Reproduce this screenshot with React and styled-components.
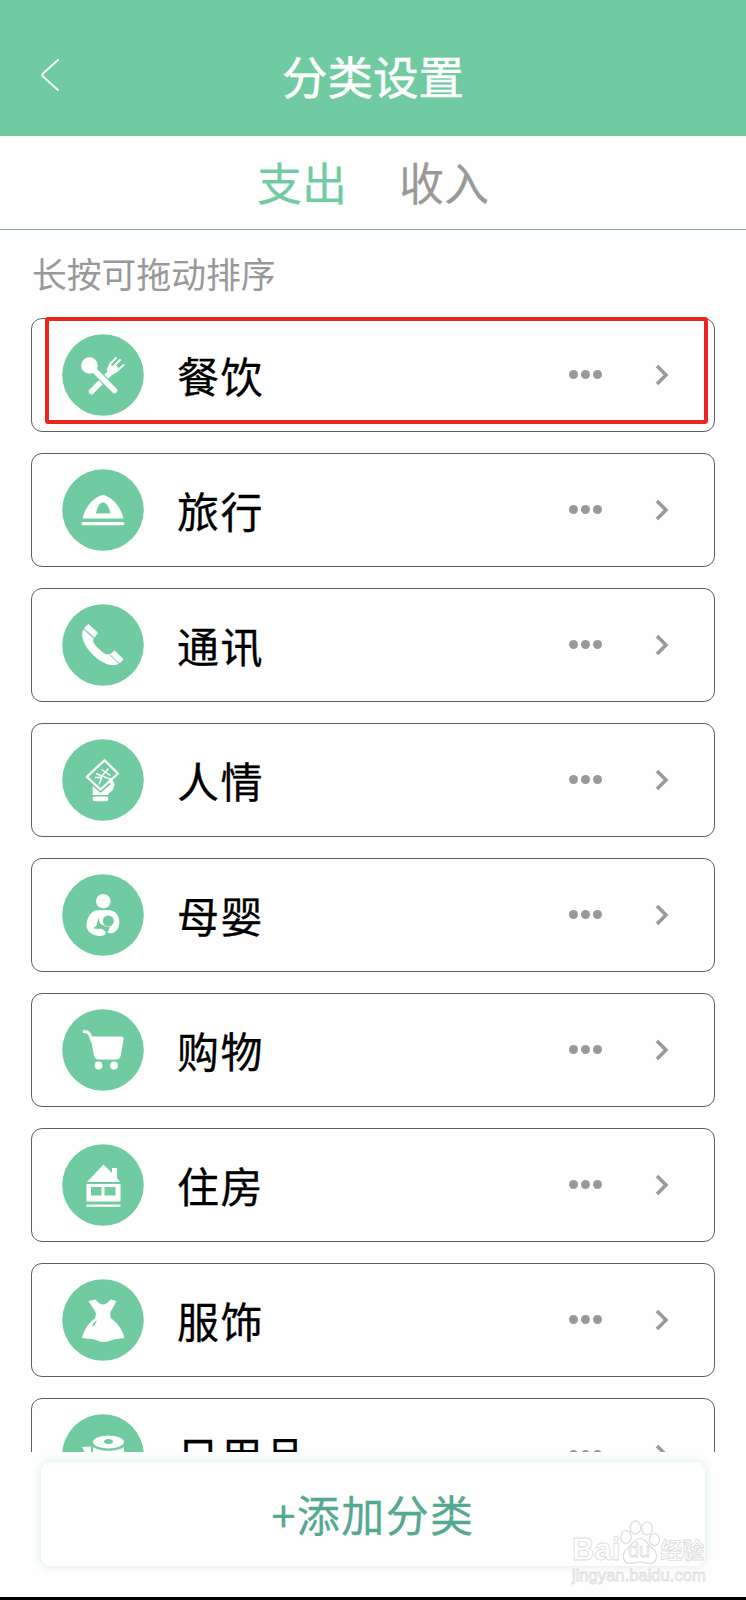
import React, { useState } from "react";
import styled, { createGlobalStyle } from "styled-components";

const GREEN = "#70cca0";

// icons are drawn on an 82 x 82 disc
const icons = {
  food: (
    <>
      <path d="M53 34 L29.500 57.500" stroke="#fff" strokeWidth="5.500" strokeLinecap="round" />
      <path
        d="M46 35 L48.500 29.500 L54 24 M50 34 L58 26 M47 40 L54 38 L61.500 31"
        stroke="#fff"
        strokeWidth="1.900"
        strokeLinecap="round"
      />
      <path d="M44.500 36 L48 30 L55.500 37 L50 41 Z" fill="#fff" />
      <path d="M30 34 L53 57" stroke={GREEN} strokeWidth="8" />
      <circle cx="27.500" cy="31.500" r="8.300" fill="#fff" />
      <path d="M30 34 L52.500 56.500" stroke="#fff" strokeWidth="5.500" strokeLinecap="round" />
    </>
  ),
  travel: (
    <>
      <path
        fill="#fff"
        fillRule="evenodd"
        d="M20.500 49.500 C23 39 29 31 38 26.800 Q41 25.200 44 26.800 C53 31 59 39 61.500 49.500 Z M34 44.500 H48.500 C47 37 44 33.500 41 33.500 C38 33.500 35.500 37 34 44.500 Z"
      />
      <rect x="19.500" y="53" width="43" height="3.200" rx="1.600" fill="#fff" />
    </>
  ),
  phone: (
    <>
      <path
        fill="#fff"
        d="M21.500 25 L32 34 C30 37 31.500 39.500 36 44 C41 49 44.500 52 48 49.500 L57 59.500 C52 63 43 61 34.500 54 C25 46 17 34 21.500 25 Z"
      />
      <path d="M26.300 20.500 L35.500 28.800 L32.500 33 L22.500 24.300 Z" fill="#fff" stroke="#fff" strokeLinejoin="round" />
      <path d="M52.500 47 L61 55.300 L57.500 59 L48.800 50.300 Z" fill="#fff" stroke="#fff" strokeLinejoin="round" />
      <path d="M21.500 25 L32 34.500 M47.500 50.500 L57.500 60" stroke={GREEN} strokeWidth="0.900" />
    </>
  ),
  gift: (
    <>
      <path d="M42.500 21.300 L56 34.500 L38.500 50.500 L24.800 37.800 Z" stroke="#fff" strokeWidth="2.300" strokeLinejoin="round" />
      <path
        d="M39.500 30.500 L48.500 36.500 M34 34.500 L46.500 39.500 M46.500 29.500 L38.500 38.500 L33 38.500 M40 37.500 L37 45.500"
        stroke="#fff"
        strokeWidth="1.500"
      />
      <path
        fill="#fff"
        d="M30.700 47 L38.500 54 L48.500 45.500 L46.500 41.500 L47.500 38.500 L50 40 L52.700 45.500 L51 51 L46.500 54.500 V56 H30.700 Z"
      />
      <rect x="30.700" y="57.500" width="15.500" height="4.700" rx="2" fill="#fff" />
    </>
  ),
  baby: (
    <>
      <circle cx="41.300" cy="27.200" r="7.300" fill="#fff" />
      <path
        fill="#fff"
        d="M34 36.300 H48 C54 37 57.300 42 57.300 48.500 C57.300 54 54 58.500 49 59.500 L45.500 58.500 L43.500 57.500 C45 62 39 62.500 34 61.500 C28 60 24.300 55.500 24.300 51 C25 45 28 38 34 36.300 Z"
      />
      <circle cx="46.300" cy="47" r="5.500" fill={GREEN} />
      <path fill={GREEN} d="M36.500 44 L38 49.500 L43.500 52.500 L48 53 L45.500 58.500 L43.500 57.500 L40 55 L31 54.500 L34.500 51.500 Z" />
    </>
  ),
  cart: (
    <>
      <path d="M22 22.500 C27 22.500 28 25 30 32" stroke="#fff" strokeWidth="3" strokeLinecap="round" />
      <path
        fill="#fff"
        d="M28.500 27.500 H59 C61.500 27.500 62 29 61.500 31 L59 45 C58.500 49 57 50.500 54 50.500 H37 C34 50.500 32.500 49.500 31.500 45 Z"
      />
      <circle cx="36.500" cy="56.500" r="3.900" fill="#fff" />
      <circle cx="52" cy="56.500" r="3.900" fill="#fff" />
    </>
  ),
  house: (
    <>
      <path fill="#fff" d="M25 38 L41.500 20.500 L50 29 V24 H55 V34 L58 38 Z" />
      <path
        fill="#fff"
        fillRule="evenodd"
        d="M24.500 40 H58.500 V57.500 H24.500 Z M29 43 V51.500 H39.500 V43 Z M42.500 43 V51.500 H53.500 V43 Z"
      />
      <rect x="24.500" y="60.500" width="34" height="2.300" fill="#fff" />
    </>
  ),
  dress: (
    <>
      <path
        fill="#fff"
        d="M26.500 22 L33.500 20.500 C36 24 38.500 25.500 41 25.500 C43.500 25.500 46 24 48.500 20.500 L54.500 22 L48.500 33 Q47.500 36 49 39.500 C55 43 60.500 51 62.500 59 C58 60 54 59 50.500 61 C44 63.500 39 63.500 34 61 C29 59 24.500 60 20 59 C22 51 27 43 33 39.500 Q34.500 36 33.500 33 Z"
      />
      <path fill={GREEN} d="M35 41 L31.500 44 L30 47.500 L32.500 46.500 Z" />
    </>
  ),
  daily: (
    <>
      <ellipse cx="46.500" cy="28" rx="15.500" ry="6.500" fill="#fff" />
      <ellipse cx="46.500" cy="27.500" rx="4.500" ry="2.500" fill={GREEN} />
      <path fill="#fff" d="M31 33 C38 38 55 38 62 33 V60 H31 Z M20 33 L29 32.500 V50 Z" />
    </>
  ),
};

const categories = [
  { name: "餐饮", icon: "food" },
  { name: "旅行", icon: "travel" },
  { name: "通讯", icon: "phone" },
  { name: "人情", icon: "gift" },
  { name: "母婴", icon: "baby" },
  { name: "购物", icon: "cart" },
  { name: "住房", icon: "house" },
  { name: "服饰", icon: "dress" },
  { name: "日用品", icon: "daily" },
];

const CategoryRow = ({ name, icon, marked }) => {
  return (
    <Card>
      <IconDisc viewBox="0 0 82 82" fill="none">
        <circle cx="41" cy="41" r="40.800" fill={GREEN} />
        {icons[icon]}
      </IconDisc>
      <Name>{name}</Name>
      <Dots>
        <i />
        <i />
        <i />
      </Dots>
      <Chevron viewBox="0 0 14 22" fill="none">
        <path d="M2 2 L11 11 L2 20" stroke="#999" strokeWidth="3.500" />
      </Chevron>
      {marked && <Marker />}
    </Card>
  );
};

const Watermark = () => {
  return (
    <WatermarkBox>
      <div className="brand">
        <span>Bai</span>
        <svg width="40" height="46" viewBox="0 0 40 46" fill="#fff" stroke="#dcdcdc" strokeWidth="1.200">
          <ellipse cx="6" cy="17" rx="5.200" ry="6.500" />
          <ellipse cx="15.500" cy="7.500" rx="5.200" ry="6.700" />
          <ellipse cx="27" cy="8.500" rx="5.200" ry="6.500" />
          <ellipse cx="34.500" cy="19.500" rx="5" ry="6" />
          <path d="M20.500 18.500 C26 18.500 27 24 32 28 C39 33 37 43.500 30 43.500 C25 43.500 24 42 20 42 C16 42 15 43.500 10 43.500 C3 43.500 1 34 7 29 C13 24 14 18.500 20.500 18.500 Z" />
        </svg>
        <em>du</em>
        <b>经验</b>
      </div>
      <p>jingyan.baidu.com</p>
    </WatermarkBox>
  );
};

const App = () => {
  const [tab, setTab] = useState("out");

  return (
    <Screen>
      <GlobalStyle />
      <Header>
        <Back viewBox="0 0 20 34" fill="none">
          <path d="M18.500 1.500 L3 15.500 Q1.500 17 3 18.500 L18.500 32.500" stroke="#fff" strokeWidth="1.800" />
        </Back>
        <h1>分类设置</h1>
      </Header>
      <Tabs>
        <Tab $active={tab === "out"} onClick={() => setTab("out")}>
          支出
        </Tab>
        <Tab $active={tab === "in"} onClick={() => setTab("in")}>
          收入
        </Tab>
      </Tabs>
      <List>
        <Hint>长按可拖动排序</Hint>
        {categories.map((item, index) => (
          <CategoryRow key={item.name} {...item} marked={index === 0} />
        ))}
      </List>
      <Footer>
        <AddButton>+添加分类</AddButton>
        <Watermark />
      </Footer>
    </Screen>
  );
};

export default App;

const GlobalStyle = createGlobalStyle`
  * {
    box-sizing: border-box;
  }
  body {
    margin: 0;
    background: #fefefe;
    font-family: "Noto Sans CJK SC", sans-serif;
  }
  h1, p {
    margin: 0;
  }
  button {
    padding: 0;
    border: none;
    background: none;
    font-family: inherit;
    cursor: pointer;
  }
`;

const Screen = styled.div`
  display: flex;
  flex-direction: column;
  height: 1600px;
  overflow: hidden;
  background: #fefefe;
`;

const Header = styled.header`
  display: grid;
  grid-template-columns: 100px 1fr 100px;
  align-items: center;
  height: 136px;
  flex-shrink: 0;
  padding-top: 13px;
  background: ${GREEN};
  h1 {
    color: #fff;
    font-size: 45.5px;
    line-height: 60px;
    font-weight: 400;
    text-align: center;
    -webkit-text-stroke: 0.5px #fff;
  }
`;

const Back = styled.svg`
  width: 20px;
  height: 34px;
  margin-left: 40px;
`;

const Tabs = styled.nav`
  display: flex;
  justify-content: center;
  gap: 52px;
  height: 94px;
  flex-shrink: 0;
  border-bottom: 1px solid #86aa9f;
`;

const Tab = styled.button`
  padding-bottom: 1px;
  font-size: 45px;
  line-height: 60px;
  color: ${({ $active }) => ($active ? GREEN : "#999")};
  -webkit-text-stroke: 0.2px currentColor;
`;

const List = styled.main`
  display: flex;
  flex-direction: column;
  gap: 21px;
  flex: 1;
  min-height: 0;
  padding: 21px 31px 0;
  overflow: hidden;
`;

const Hint = styled.p`
  height: 46px;
  flex-shrink: 0;
  padding-left: 1px;
  font-size: 34.8px;
  line-height: 44px;
  color: #999;
`;

const Card = styled.div`
  position: relative;
  display: flex;
  align-items: center;
  height: 114px;
  flex-shrink: 0;
  padding: 0 45px 0 30px;
  border: 1px solid #606060;
  border-radius: 11px;
`;

const IconDisc = styled.svg`
  width: 82px;
  height: 82px;
  margin-bottom: 1px;
`;

const Name = styled.span`
  flex: 1;
  padding-left: 33px;
  padding-bottom: 1px;
  color: #000;
  font-size: 42px;
  line-height: 60px;
  letter-spacing: 1.5px;
  -webkit-text-stroke: 0.3px #000;
`;

const Dots = styled.div`
  display: flex;
  gap: 2.6px;
  margin-right: 53.5px;
  padding-bottom: 0.5px;
  i {
    width: 9px;
    height: 9px;
    border-radius: 50%;
    background: #999;
  }
`;

const Chevron = styled.svg`
  width: 14px;
  height: 22px;
`;

// highlight frame drawn over the row
const Marker = styled.div`
  position: absolute;
  inset: -2px 6px 7px 13px;
  border: 4px solid #e8281e;
  border-radius: 3px;
`;

const Footer = styled.footer`
  position: relative;
  height: 148px;
  flex-shrink: 0;
  padding: 10px 41px 0;
  border-bottom: 3px solid #000;
`;

const AddButton = styled.button`
  display: block;
  width: 100%;
  height: 104px;
  padding-bottom: 2px;
  border-radius: 9px;
  background: #fefefe;
  box-shadow: 0 0 8px rgba(80, 170, 140, 0.24);
  color: #55a892;
  font-size: 43px;
  letter-spacing: 1.4px;
  -webkit-text-stroke: 0.3px #55a892;
`;

const WatermarkBox = styled.div`
  position: absolute;
  left: 572px;
  top: 68px;
  font-family: "Liberation Sans", "Noto Sans CJK SC", sans-serif;
  color: #fff;
  -webkit-text-stroke: 0.8px #dcdcdc;
  .brand {
    position: relative;
    display: flex;
    align-items: flex-end;
    height: 46px;
  }
  span {
    font-size: 31px;
    line-height: 32px;
    font-weight: 700;
  }
  em {
    position: absolute;
    left: 56px;
    bottom: 5px;
    font-size: 20px;
    line-height: 21px;
    font-style: normal;
  }
  b {
    font-size: 22px;
    line-height: 30px;
  }
  p {
    font-size: 16.600px;
    line-height: 20px;
  }
`;
